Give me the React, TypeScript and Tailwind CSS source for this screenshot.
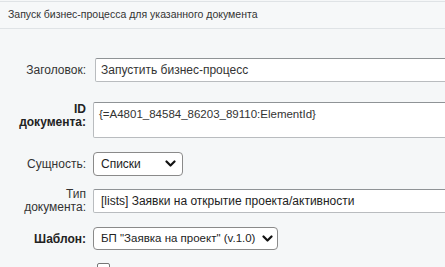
import React from "react";

function Chevron() {
  return (
    <svg width="11" height="8" viewBox="0 0 11 8" className="shrink-0">
      <path d="M1.5 1.5 L5.5 5.5 L9.5 1.5" fill="none" stroke="#111" strokeWidth="2.2" strokeLinecap="round" strokeLinejoin="round" />
    </svg>
  );
}

export default function App() {
  return (
    <div className="w-[445px] h-[267px] overflow-hidden bg-[#f5f7f8] font-['Liberation_Sans',Arial,sans-serif] text-[12px] text-[#333]">
      <div className="mt-px h-[28px] border-t border-b border-[#dfe3e6] bg-[#f6f8f9] flex items-center pl-[8px] text-[10.5px] text-[#333]">
        Запуск бизнес-процесса для указанного документа
      </div>

      <div className="pt-[29px] flex flex-col">
        {/* Заголовок */}
        <div className="flex items-center h-[24px]">
          <div className="w-[86px] shrink-0 text-right">Заголовок:</div>
          <div className="ml-[9px] w-[380px] shrink-0 h-[24px] bg-white border border-[#b9bcbf] border-t-[#8f9396] rounded-[2px] pl-[5px] flex items-center text-[#333] whitespace-nowrap">
            Запустить бизнес-процесс
          </div>
        </div>

        {/* ID документа */}
        <div className="flex items-start mt-[20px]">
          <div className="w-[86px] shrink-0 text-right font-bold leading-[13px] pt-[1px] text-[#222]">
            ID
            <br />
            документа:
          </div>
          <div className="ml-[7px] w-[380px] shrink-0 h-[36px] bg-white border border-[#b9bcbf] border-t-[#8f9396] rounded-[2px] pl-[5px] pt-[4px] leading-[15px] text-[11.5px] text-[#333] whitespace-nowrap">
            {"{=A4801_84584_86203_89110:ElementId}"}
          </div>
        </div>

        {/* Сущность */}
        <div className="flex items-center mt-[14px] h-[24px]">
          <div className="w-[86px] shrink-0 text-right">Сущность:</div>
          <div className="ml-[7px] w-[90px] shrink-0 h-[24px] bg-white border border-[#8a8a8a] rounded-[4px] pl-[7px] pr-[6px] flex items-center justify-between text-[#222]">
            <span>Списки</span>
            <Chevron />
          </div>
        </div>

        {/* Тип документа */}
        <div className="flex items-center mt-[13px] h-[24px]">
          <div className="w-[86px] shrink-0 text-right leading-[13px]">
            Тип
            <br />
            документа:
          </div>
          <div className="ml-[7px] w-[380px] shrink-0 h-[24px] bg-white border border-[#b9bcbf] border-t-[#8f9396] rounded-[2px] pl-[7px] flex items-center text-[#222] whitespace-nowrap">
            [lists] Заявки на открытие проекта/активности
          </div>
        </div>

        {/* Шаблон */}
        <div className="flex items-center mt-[14px] h-[23px]">
          <div className="w-[86px] shrink-0 text-right font-bold text-[#222]">Шаблон:</div>
          <div className="ml-[7px] w-[185px] shrink-0 h-[23px] bg-white border border-[#8a8a8a] rounded-[4px] pl-[7px] pr-[4px] flex items-center justify-between text-[11.5px] text-[#222] whitespace-nowrap">
            <span>БП "Заявка на проект" (v.1.0)</span>
            <Chevron />
          </div>
        </div>

        {/* checkbox */}
        <div className="flex items-start mt-[13px] h-[14px]">
          <div className="w-[86px] shrink-0" />
          <div className="ml-[11px] w-[13px] h-[13px] shrink-0 bg-white border border-[#767676] rounded-[2px]" />
        </div>
      </div>
    </div>
  );
}
